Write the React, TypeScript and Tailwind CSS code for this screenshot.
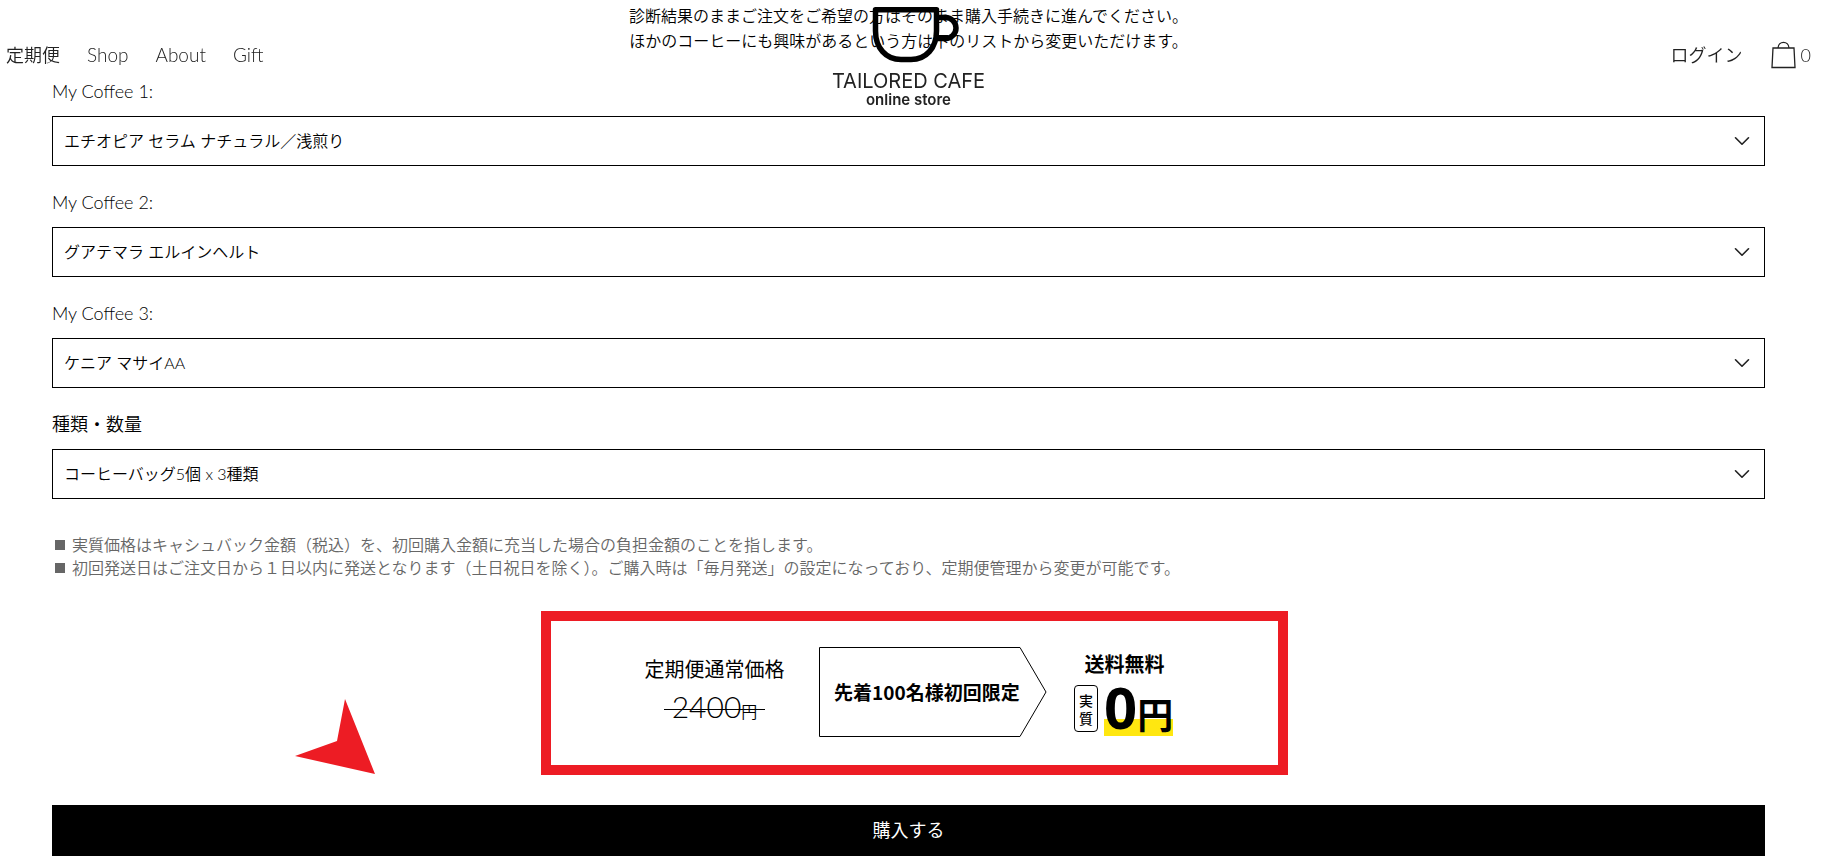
import { ChevronDown } from "lucide-react";

type CoffeeField = {
  id: string;
  label: string;
  options: string[];
};

const fields: CoffeeField[] = [
  {
    id: "coffee-1",
    label: "My Coffee 1:",
    options: ["エチオピア セラム ナチュラル／浅煎り"],
  },
  {
    id: "coffee-2",
    label: "My Coffee 2:",
    options: ["グアテマラ エルインヘルト"],
  },
  {
    id: "coffee-3",
    label: "My Coffee 3:",
    options: ["ケニア マサイAA"],
  },
  {
    id: "quantity",
    label: "種類・数量",
    options: ["コーヒーバッグ5個 x 3種類"],
  },
];

const notes = [
  "実質価格はキャシュバック金額（税込）を、初回購入金額に充当した場合の負担金額のことを指します。",
  "初回発送日はご注文日から１日以内に発送となります（土日祝日を除く）。ご購入時は「毎月発送」の設定になっており、定期便管理から変更が可能です。",
];

const navLinks = ["Shop", "About", "Gift"];

function Logo() {
  return (
    <a
      href="#"
      className="flex flex-col items-center text-[#222] font-['Inter',sans-serif]"
    >
      <svg
        width="100"
        height="56"
        viewBox="0 0 100 56"
        fill="none"
        stroke="#000"
        strokeWidth="5.500"
        aria-hidden="true"
      >
        <path
          d="M16.500 2.750H77.500V24C77.500 41 67 52.500 52 52.500H42C27 52.500 16.500 41 16.500 24Z"
          strokeLinejoin="round"
        />
        <path d="M78 10.500H86.500A10.500 10.500 0 0 1 86.500 31.500H77" />
      </svg>
      <span className="mt-[7px] text-[20px] leading-[22px]">TAILORED CAFE</span>
      <span className="text-[15px] leading-4 font-semibold">online store</span>
    </a>
  );
}

function Header() {
  return (
    <header className="fixed inset-x-0 top-0 z-10 grid grid-cols-[1fr_auto_1fr] pl-[6px] pr-[11px] pt-[7px] text-[18px] text-[#222]">
      <nav className="mt-[35px] flex items-center gap-[27px] self-start leading-[26px] font-[350]">
        <a href="#">定期便</a>
        {navLinks.map((link) => (
          <a key={link} href="#" className="text-[19px]">
            {link}
          </a>
        ))}
      </nav>
      <Logo />
      <div className="mt-[34px] flex h-7 items-center justify-end self-start font-[350]">
        <a href="#">ログイン</a>
        <a href="#" className="ml-7 flex items-center gap-[5px]">
          <svg
            width="25"
            height="28"
            viewBox="0 0 25 28"
            fill="none"
            stroke="#222"
            strokeWidth="1.300"
            aria-hidden="true"
          >
            <path d="M2 7H23L24 26.500H1Z" />
            <path d="M7 7C7.500 -0.500 17.500 -0.500 18 7" />
          </svg>
          0
        </a>
      </div>
    </header>
  );
}

function SelectField({ id, label, options }: CoffeeField) {
  return (
    <div>
      <label
        htmlFor={id}
        className="mb-3 block text-[18px] leading-[26px] font-[350]"
      >
        {label}
      </label>
      <div className="relative">
        <select
          id={id}
          className="block h-[50px] w-full appearance-none border border-black bg-white px-[11px] text-[16px] font-[350]"
        >
          {options.map((option) => (
            <option key={option}>{option}</option>
          ))}
        </select>
        <ChevronDown
          className="pointer-events-none absolute right-[10px] top-3 text-[#222]"
          size={26}
          strokeWidth={1.5}
        />
      </div>
    </div>
  );
}

function PriceBox() {
  return (
    <div className="flex h-[164px] w-[747px] items-start border-10 border-[#ed1c24] pl-[93px] pt-[26px]">
      <div className="mt-[7px] flex w-[141px] flex-col items-center">
        <p className="text-[20px] leading-[30px]">定期便通常価格</p>
        <div className="grid items-center justify-items-center">
          <p className="col-start-1 row-start-1 text-[30px] leading-[44px] font-[350] font-['Lato','Noto_Sans_CJK_JP',sans-serif]">
            2400<span className="text-[16px]">円</span>
          </p>
          <span className="col-start-1 row-start-1 h-px w-[101px] bg-black"></span>
        </div>
      </div>
      <div className="ml-[34px] grid items-center">
        <svg
          className="col-start-1 row-start-1"
          width="228"
          height="90"
          viewBox="0 0 228 90"
          fill="none"
          stroke="#000"
          aria-hidden="true"
        >
          <path d="M0.500 0.500H201L227 45L201 89.500H0.500Z" />
        </svg>
        <p className="col-start-1 row-start-1 pl-[15px] text-[19px] font-bold">
          先着100名様初回限定
        </p>
      </div>
      <div className="ml-[27px] flex w-[101px] flex-col items-center">
        <p className="text-[20px] leading-[34px] font-bold">送料無料</p>
        <div className="mt-1 flex w-full items-start gap-[6px]">
          <span className="flex h-[47px] w-6 flex-col items-center justify-center rounded border border-black text-[14px] leading-[18px] font-medium">
            <span>実</span>
            <span>質</span>
          </span>
          <p className="h-[51px] bg-linear-to-b from-transparent from-67% to-[#ffe710] to-67% text-[58px] leading-[44px] font-bold whitespace-nowrap font-['Open_Sans','Noto_Sans_CJK_JP',sans-serif]">
            0<span className="text-[36px]">円</span>
          </p>
        </div>
      </div>
    </div>
  );
}

export default function App() {
  return (
    <div className="bg-white text-black font-['Lato','Noto_Sans_CJK_JP',sans-serif]">
      <Header />
      <main className="pl-[52px] pr-[57px] pt-[3px]">
        <p className="text-center text-[16px] leading-[25px] font-[350]">
          診断結果のままご注文をご希望の方はそのまま購入手続きに進んでください。
          <br />
          ほかのコーヒーにも興味があるという方は下のリストから変更いただけます。
        </p>
        <form className="mt-[25px]">
          <div className="flex flex-col gap-[23px]">
            {fields.map((field) => (
              <SelectField key={field.id} {...field} />
            ))}
          </div>
          <ul className="mt-[34px] text-[16px] leading-[23px] font-[350] text-[#666]">
            {notes.map((note) => (
              <li key={note} className="flex items-center gap-[7px] pl-[3px]">
                <span className="size-[10px] shrink-0 bg-[#666]"></span>
                {note}
              </li>
            ))}
          </ul>
          <div className="mt-8 grid grid-cols-[1fr_auto_1fr] pl-3 font-['Noto_Sans_CJK_JP',sans-serif]">
            <svg
              className="mr-[166px] mt-[87px] justify-self-end"
              width="80"
              height="76"
              viewBox="0 0 80 76"
              aria-hidden="true"
            >
              <polygon points="50,1 42,43 0,58 80,76" fill="#ed1c24" />
            </svg>
            <PriceBox />
          </div>
          <button
            type="button"
            className="mt-[30px] block h-[51px] w-full bg-black text-[18px] text-white"
          >
            購入する
          </button>
        </form>
      </main>
    </div>
  );
}
